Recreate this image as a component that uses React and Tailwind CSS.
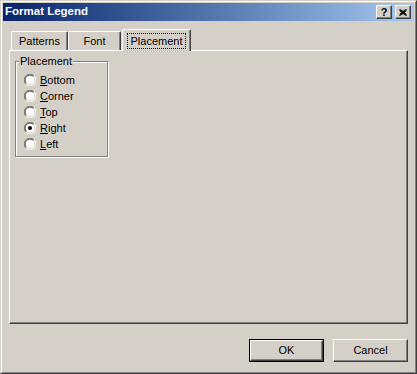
// Format Legend dialog, Windows classic look
import React, { useState } from "react";

const Radio = ({ checked }) => (
  <svg width="12" height="12" viewBox="0 0 12 12" className="shrink-0">
    <circle cx="6" cy="6" r="5.5" fill="#fff" />
    {/* outer top-left */}
    <path d="M1.8 10.2 A5.5 5.5 0 0 1 10.2 1.8" fill="none" stroke="#808080" strokeWidth="1" />
    {/* inner top-left */}
    <path d="M2.5 9.5 A4.5 4.5 0 0 1 9.5 2.5" fill="none" stroke="#404040" strokeWidth="1" />
    {/* outer bottom-right */}
    <path d="M10.2 1.8 A5.5 5.5 0 0 1 1.8 10.2" fill="none" stroke="#fff" strokeWidth="1" />
    {/* inner bottom-right */}
    <path d="M9.5 2.5 A4.5 4.5 0 0 1 2.5 9.5" fill="none" stroke="#d4d0c8" strokeWidth="1" />
    {checked && <circle cx="6" cy="6" r="2" fill="#000" />}
  </svg>
);

const TitleButton = ({ children }) => (
  <div className="w-[16px] h-[14px] bg-[#d4d0c8] border border-t-white border-l-white border-r-[#404040] border-b-[#404040] shadow-[inset_-1px_-1px_#808080] flex items-center justify-center">
    {children}
  </div>
);

const PushButton = ({ label, isDefault }) => (
  <button
    className={`w-[75px] h-[23px] bg-[#d4d0c8] text-black text-[11px] ${
      isDefault ? "border border-black" : ""
    }`}
  >
    <div className="w-full h-full border border-t-white border-l-white border-r-[#404040] border-b-[#404040] shadow-[inset_-1px_-1px_#808080] flex items-center justify-center">
      {label}
    </div>
  </button>
);

const options = [
  { first: "B", rest: "ottom" },
  { first: "C", rest: "orner" },
  { first: "T", rest: "op" },
  { first: "R", rest: "ight" },
  { first: "L", rest: "eft" },
];

export default function App() {
  const [placement, setPlacement] = useState("Right");

  return (
    <div className="w-[417px] h-[374px] bg-[#d4d0c8] border border-t-[#d4d0c8] border-l-[#d4d0c8] border-r-[#404040] border-b-[#404040] font-['Liberation_Sans',Arial,sans-serif] text-[11px] text-black select-none">
      <div className="w-full h-full border border-t-white border-l-white border-r-[#808080] border-b-[#808080] p-px flex flex-col">
        {/* Title bar */}
        <div className="h-[18px] flex items-center justify-between pl-[2px] pr-[2px] bg-gradient-to-r from-[#0a246a] to-[#a6caf0]">
          <span className="text-white font-bold text-[11.5px] leading-none">Format Legend</span>
          <div className="flex gap-[1px] mr-px">
            <TitleButton>
              <span className="font-bold text-[11px] leading-none mt-px">?</span>
            </TitleButton>
            <div className="w-[1px]" />
            <TitleButton>
              <svg width="8" height="7" viewBox="0 0 8 7">
                <path d="M0.5 0.5 L7.5 6.5 M1.5 0.5 L7.5 5.5 M0.5 1.5 L6.5 6.5 M7.5 0.5 L0.5 6.5 M6.5 0.5 L0.5 5.5 M7.5 1.5 L1.5 6.5" stroke="#000" strokeWidth="1" />
              </svg>
            </TitleButton>
          </div>
        </div>

        {/* Body */}
        <div className="flex-1 px-[6px] pt-[8px] flex flex-col">
          {/* Tabs */}
          <div className="h-[21px] flex items-end pl-[2px]">
            <div className="w-[57px] h-[19px] border-l border-t border-white border-r border-r-[#404040] shadow-[inset_-1px_0_#808080] rounded-tl-[2px] rounded-tr-[2px] flex items-center justify-center">
              Patterns
            </div>
            <div className="w-[53px] h-[19px] border-l border-t border-white border-r border-r-[#404040] shadow-[inset_-1px_0_#808080] rounded-tl-[2px] rounded-tr-[2px] flex items-center justify-center">
              Font
            </div>
            <div className="ml-[1px] w-[69px] h-[22px] -mb-px relative z-10 bg-[#d4d0c8] border-l border-t border-white border-r border-r-[#404040] shadow-[inset_-1px_0_#808080] rounded-tl-[2px] rounded-tr-[2px] flex items-start justify-center pt-[3px]">
              <span className="border border-dotted border-black px-[3px] h-[16px] leading-[14px]">Placement</span>
            </div>
          </div>

          {/* Panel */}
          <div className="w-[399px] h-[274px] border border-t-white border-l-white border-r-[#404040] border-b-[#404040] shadow-[inset_-1px_-1px_#808080] pl-[5px] pt-[10px]">
            <div className="relative w-[93px] h-[96px] border border-[#808080] shadow-[inset_1px_1px_#fff,1px_1px_#fff] pl-[8px] pt-[10px]">
              <span className="absolute left-[3px] top-[-7px] bg-[#d4d0c8] px-px leading-[13px]">Placement</span>
              {options.map((o) => {
                const name = o.first + o.rest;
                return (
                  <div
                    key={name}
                    className="h-[16px] flex items-center gap-[4px] cursor-default"
                    onClick={() => setPlacement(name)}
                  >
                    <Radio checked={placement === name} />
                    <span>
                      <span className="underline underline-offset-1">{o.first}</span>
                      {o.rest}
                    </span>
                  </div>
                );
              })}
            </div>
          </div>

          {/* Buttons */}
          <div className="flex justify-end gap-[9px] mt-[15px]">
            <PushButton label="OK" isDefault />
            <PushButton label="Cancel" />
          </div>
        </div>
      </div>
    </div>
  );
}
